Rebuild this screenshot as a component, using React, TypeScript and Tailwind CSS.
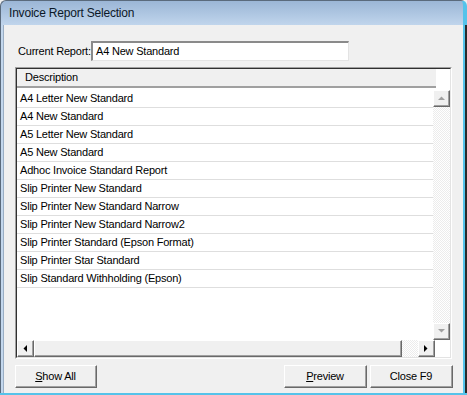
import React from 'react';

const REPORTS = [
  'A4 Letter New Standard',
  'A4 New Standard',
  'A5 Letter New Standard',
  'A5 New Standard',
  'Adhoc Invoice Standard Report',
  'Slip Printer New Standard',
  'Slip Printer New Standard Narrow',
  'Slip Printer New Standard Narrow2',
  'Slip Printer Standard (Epson Format)',
  'Slip Printer Star Standard',
  'Slip Standard Withholding (Epson)',
];

// classic 3d raised edge, used by buttons and scrollbar parts
function Raised({ className = '', children }: { className?: string; children?: React.ReactNode }) {
  return (
    <div className={`border-t border-l border-t-white border-l-white border-b border-r border-b-[#696969] border-r-[#696969] ${className}`}>
      <div className="w-full h-full flex items-center justify-center bg-[#f0f0f0] border-b border-r border-b-[#a0a0a0] border-r-[#a0a0a0]">
        {children}
      </div>
    </div>
  );
}

function Arrow({ dir, color }: { dir: 'up' | 'down' | 'left' | 'right'; color: string }) {
  const pts = {
    up: '0,4 7,4 3.5,0.5',
    down: '0,0 7,0 3.5,3.5',
    left: '4,0 4,7 0.5,3.5',
    right: '0,0 0,7 3.5,3.5',
  }[dir];
  const vertical = dir === 'up' || dir === 'down';
  return (
    <svg width={vertical ? 7 : 4} height={vertical ? 4 : 7} viewBox={vertical ? '0 0 7 4' : '0 0 4 7'}>
      <polygon points={pts} fill={color} />
    </svg>
  );
}

const checker = 'bg-[image:repeating-conic-gradient(#ffffff_0%_25%,#ececec_0%_50%)] bg-[length:2px_2px]';

function Button({ children }: { children: React.ReactNode }) {
  return (
    <Raised className="w-[83px] h-[23px] text-[11px] text-black">
      {children}
    </Raised>
  );
}

export default function App() {
  return (
    <div className="w-[467px] h-[395px] flex flex-col bg-[#f0f0f0] font-['Liberation_Sans',Arial,sans-serif] tracking-[-0.2px] overflow-hidden">
      {/* Title bar */}
      <div className="h-[25px] shrink-0 flex items-center pl-[8px] rounded-t-[6px] border-t border-l border-[#5a6a7c] border-r-4 border-r-[#55c3ea] bg-gradient-to-b from-[#9bb6d6] to-[#c0d5ec]">
        <span className="text-[12px] text-[#0c1828]">Invoice Report Selection</span>
      </div>

      <div className="flex-1 flex min-h-0">
        {/* left frame */}
        <div className="w-[4px] flex shrink-0">
          <div className="w-px bg-[#5a6a7c]" />
          <div className="w-[2px] bg-[#c3d7ed]" />
          <div className="w-px bg-[#9aaec4]" />
        </div>

        {/* Dialog body */}
        <div className="flex-1 flex flex-col pl-[11px] pt-[16px]">
          <div className="flex items-center h-[20px]">
            <span className="w-[76px] pl-[3px] text-[11px] text-black whitespace-nowrap">Current Report:</span>
            <div className="w-[258px] h-[20px] bg-white border-t-2 border-l-2 border-t-[#8a8a8a] border-l-[#8a8a8a] border-b border-r border-b-[#e3e3e3] border-r-[#e3e3e3] flex items-center pl-[3px] text-[11px] text-black">
              A4 New Standard
            </div>
          </div>

          {/* Grid */}
          <div className="mt-[6px] w-[437px] h-[292px] border-t border-l border-t-[#a0a0a0] border-l-[#a0a0a0] border-b border-r border-b-white border-r-white">
            <div className="w-full h-full flex flex-col bg-white border-t border-l border-t-[#303030] border-l-[#303030] border-b border-r border-b-[#e3e3e3] border-r-[#e3e3e3]">
              <div className="h-[19px] shrink-0 flex">
                <div className="w-[419px] h-full bg-[#f0f0f0] border-b-2 border-b-[#a0a0a0] flex items-center pl-[8px] text-[11px] text-black">
                  Description
                </div>
              </div>

              <div className="flex-1 flex min-h-0">
                <div className="flex-1 pt-[2px]">
                  {REPORTS.map((r) => (
                    <div key={r} className="h-[18px] border-b border-b-[#dedede] pl-[3px] flex items-center text-[11px] text-black whitespace-nowrap">
                      {r}
                    </div>
                  ))}
                </div>
                <div className="w-[17px] mt-[2px] flex flex-col">
                  <Raised className="h-[17px] shrink-0">
                    <Arrow dir="up" color="#a0a0a0" />
                  </Raised>
                  <div className={`flex-1 ${checker}`} />
                  <Raised className="h-[17px] shrink-0">
                    <Arrow dir="down" color="#a0a0a0" />
                  </Raised>
                </div>
              </div>

              <div className="h-[17px] shrink-0 flex">
                <Raised className="w-[17px] h-full">
                  <Arrow dir="left" color="#000000" />
                </Raised>
                <Raised className="w-[368px] h-full" />
                <div className={`w-[16px] h-full ${checker}`} />
                <Raised className="w-[17px] h-full">
                  <Arrow dir="right" color="#000000" />
                </Raised>
                <div className="flex-1 bg-white" />
              </div>
            </div>
          </div>

          {/* Buttons */}
          <div className="mt-[6px] flex w-[438px]">
            <Raised className="w-[82px] h-[23px] text-[11px] text-black">
              <span><span className="underline">S</span>how All</span>
            </Raised>
            <div className="flex-1" />
            <Button>
              <span><span className="underline">P</span>review</span>
            </Button>
            <div className="w-[3px]" />
            <Button>Close F9</Button>
          </div>
        </div>

        {/* right frame */}
        <div className="w-[4px] flex shrink-0">
          <div className="w-[2px] bg-[#55c3ea]" />
          <div className="w-[2px] bg-[#2a2a2a]" />
        </div>
      </div>

      <div className="h-[2px] shrink-0 bg-[#55c3ea]" />
    </div>
  );
}
